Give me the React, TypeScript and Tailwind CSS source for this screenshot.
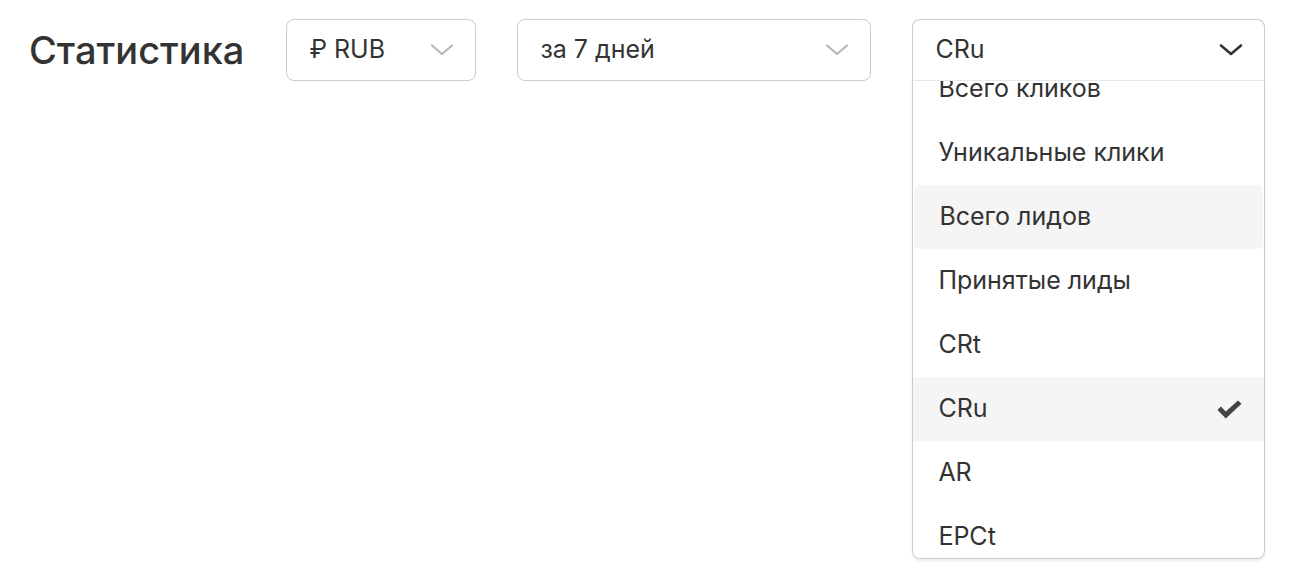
import { useState } from "react";

type Option = {
  id: string;
  label: string;
};

const metrics: Option[] = [
  { id: "clicks", label: "Всего кликов" },
  { id: "unique", label: "Уникальные клики" },
  { id: "leads", label: "Всего лидов" },
  { id: "accepted", label: "Принятые лиды" },
  { id: "crt", label: "CRt" },
  { id: "cru", label: "CRu" },
  { id: "ar", label: "AR" },
  { id: "epct", label: "EPCt" },
];

// Chevron used by all selects
function Chevron({ dark }: { dark?: boolean }) {
  return (
    <svg
      width="24"
      height="14"
      viewBox="0 0 24 14"
      fill="none"
      className={dark ? "text-[#333333]" : "text-[#b8b8b8]"}
    >
      <path
        d="M2 2.5 L12 11 L22 2.5"
        stroke="currentColor"
        strokeWidth={dark ? 2.6 : 2.2}
        strokeLinecap="round"
        strokeLinejoin="round"
      />
    </svg>
  );
}

function Check() {
  return (
    <svg width="25" height="19" viewBox="0 0 25 19" className="text-[#444444]">
      <path
        d="M0.5 10 L3.8 6.6 L8.8 11.4 L21 0.5 L24.5 3.8 L8.8 18.5 Z"
        fill="currentColor"
      />
    </svg>
  );
}

function SimpleSelect({ label, width }: { label: string; width: string }) {
  return (
    <div
      className={`${width} h-[62px] flex items-center justify-between border border-[#cccccc] rounded-lg pl-[22px] pr-[21px] text-[25px] text-[#333333] bg-white`}
    >
      <span>{label}</span>
      <Chevron />
    </div>
  );
}

export default function App() {
  const [selected] = useState("cru");
  const hovered = "leads";

  return (
    <div
      className="w-full min-h-[588px] bg-white flex items-start gap-[41px] pl-[29px] pt-[19px]"
      style={{ fontFamily: "Inter, 'Noto Sans', sans-serif" }}
    >
      {/* Title */}
      <h1 className="h-[62px] flex items-center text-[38px] font-medium text-[#333333] mr-px">
        Статистика
      </h1>

      <SimpleSelect label="₽ RUB" width="w-[190px]" />
      <SimpleSelect label="за 7 дней" width="w-[354px]" />

      {/* Open metric select */}
      <div className="relative w-[353px] h-[62px]">
        <div className="h-full flex items-center justify-between border border-[#cccccc] border-b-[#e8e8e8] rounded-t-lg pl-[22px] pr-[21px] text-[25px] text-[#333333] bg-white">
          <span>CRu</span>
          <Chevron dark />
        </div>

        <div className="absolute top-full left-0 right-0 h-[478px] border border-t-0 border-[#cccccc] rounded-b-lg bg-white overflow-hidden shadow-[0_2px_3px_rgba(0,0,0,0.08)] z-10">
          <div className="-mt-[24px] flex flex-col">
            {metrics.map((item) => (
              <div
                key={item.id}
                className={`h-16 shrink-0 flex items-center justify-between pl-[25px] pr-[22px] text-[25px] text-[#333333] ${
                  item.id === selected
                    ? "bg-[#f5f5f5]"
                    : item.id === hovered
                      ? "bg-[#f5f5f5] rounded-md mx-px pl-[24px] pr-[21px]"
                      : ""
                }`}
              >
                <span>{item.label}</span>
                {item.id === selected && <Check />}
              </div>
            ))}
          </div>
        </div>
      </div>
    </div>
  );
}
